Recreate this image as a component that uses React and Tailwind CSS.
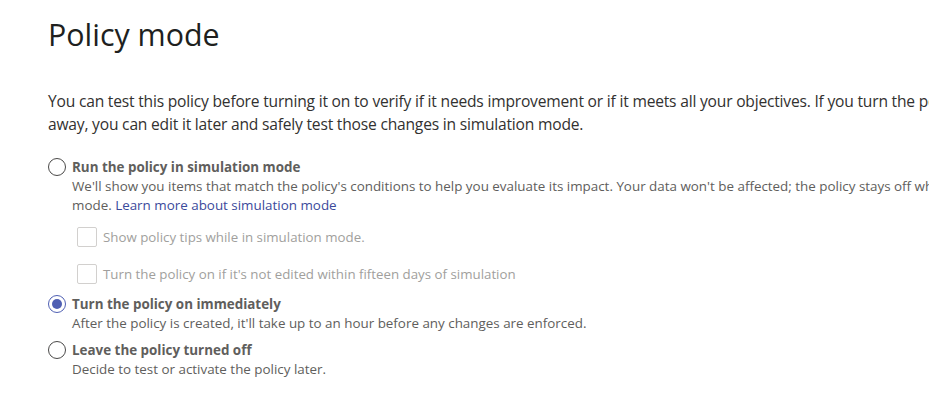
import React, { useState } from "react";

const Radio = ({ checked }) => (
  <span
    className={`flex h-[18px] w-[18px] shrink-0 items-center justify-center rounded-full border bg-white ${
      checked ? "border-[#4f5fb3]" : "border-[#4a4948]"
    }`}
  >
    {checked && <span className="h-[10px] w-[10px] rounded-full bg-[#4f5fb3]" />}
  </span>
);

const Checkbox = ({ label }) => (
  <div className="flex items-center gap-[6px] pl-[29px]">
    <span className="h-[20px] w-[20px] shrink-0 rounded-[2px] border border-[#d2d0ce] bg-white" />
    <span className="text-[13.3px] leading-[19px] text-[#a19f9d]">{label}</span>
  </div>
);

const Option = ({ checked, onSelect, title, children }) => (
  <div className="flex cursor-pointer gap-[6px]" onClick={onSelect}>
    <Radio checked={checked} />
    <div>
      <div className="text-[13.4px] font-bold leading-[19px] text-[#605e5c]">{title}</div>
      <div className="whitespace-nowrap text-[13.4px] leading-[19px] text-[#605e5c]">{children}</div>
    </div>
  </div>
);

export default function App() {
  const [mode, setMode] = useState("on");

  return (
    <div className="h-[418px] w-[929px] overflow-hidden bg-white pl-[48px] font-['Open_Sans',sans-serif]">
      <h1 className="pt-[15px] text-[30.4px] font-medium leading-[40px] text-[#201f1e]">Policy mode</h1>

      <p className="mt-[35px] whitespace-nowrap text-[15.6px] leading-[23px] tracking-[-0.2px] text-[#323130]">
        You can test this policy before turning it on to verify if it needs improvement or if it meets all your objectives. If you turn the policy on right
        <br />
        away, you can edit it later and safely test those changes in simulation mode.
      </p>

      <div className="mt-[22px] flex flex-col">
        <Option checked={mode === "sim"} onSelect={() => setMode("sim")} title="Run the policy in simulation mode">
          We'll show you items that match the policy's conditions to help you evaluate its impact. Your data won't be affected; the policy stays off while in simulation
          <br />
          mode. <span className="text-[#3b4a9b]">Learn more about simulation mode</span>
        </Option>

        <div className="mt-[12px] flex flex-col gap-[17px]">
          <Checkbox label="Show policy tips while in simulation mode." />
          <Checkbox label="Turn the policy on if it's not edited within fifteen days of simulation" />
        </div>

        <div className="mt-[11px]">
          <Option checked={mode === "on"} onSelect={() => setMode("on")} title="Turn the policy on immediately">
            After the policy is created, it'll take up to an hour before any changes are enforced.
          </Option>
        </div>

        <div className="mt-[8px]">
          <Option checked={mode === "off"} onSelect={() => setMode("off")} title="Leave the policy turned off">
            Decide to test or activate the policy later.
          </Option>
        </div>
      </div>
    </div>
  );
}
